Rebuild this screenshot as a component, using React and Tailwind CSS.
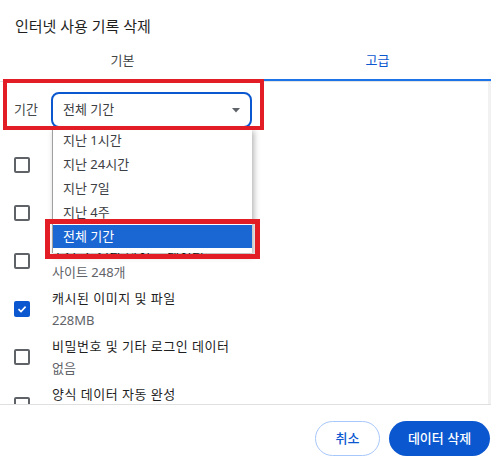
import React from 'react';

const FONT = { fontFamily: "'Noto Sans', 'Noto Sans CJK KR', sans-serif" };

const items = [
  { title: '인터넷 사용 기록', sub: '항목 1,024개', checked: false },
  { title: '다운로드 기록', sub: '없음', checked: false },
  { title: '쿠키 및 기타 사이트 데이터', sub: '사이트 248개', checked: false },
  { title: '캐시된 이미지 및 파일', sub: '228MB', checked: true },
  { title: '비밀번호 및 기타 로그인 데이터', sub: '없음', checked: false },
  { title: '양식 데이터 자동 완성', sub: '', checked: false },
];

const options = ['지난 1시간', '지난 24시간', '지난 7일', '지난 4주', '전체 기간'];

function Checkbox({ checked }) {
  if (checked) {
    return (
      <div className="w-4 h-4 rounded-[2px] bg-[#0b57d0] flex items-center justify-center">
        <svg width="12" height="12" viewBox="0 0 12 12">
          <path d="M2.5 6.2 L5 8.6 L9.6 3.6" fill="none" stroke="white" strokeWidth="1.6" />
        </svg>
      </div>
    );
  }
  return <div className="w-4 h-4 rounded-[2px] border-2 border-[#5f6368]" />;
}

export default function App() {
  return (
    <div className="relative w-[491px] h-[463px] bg-white overflow-hidden flex flex-col text-[#444746]" style={FONT}>
      {/* 제목 */}
      <div className="pt-[16px] pl-[15px] h-[42px] text-[15px] leading-[20px] text-[#1f1f1f]">
        인터넷 사용 기록 삭제
      </div>

      {/* 탭 */}
      <div className="flex h-[40px] border-b border-[#e3e3e3] text-[13px]">
        <div className="ml-[9px] w-[227px] h-[39px] pt-[8px] leading-[20px] text-center text-[#444746]">기본</div>
        <div className="ml-[28px] w-[227px] h-[39px] pt-[8px] leading-[20px] text-center text-[#0b57d0] border-b-2 border-[#1a73e8]">고급</div>
      </div>

      {/* 내용 */}
      <div className="flex h-[323px] border-b border-[#e0e0e0]">
        <div className="flex-1 pl-[14px] pt-[10px] overflow-hidden">
          <div className="flex items-center h-[36px]">
            <span className="w-[37px] text-[13px]">기간</span>
            <div className="w-[201px] h-[36px] rounded-lg border-2 border-[#0b57d0] flex items-center pl-[10px] pr-[10px] text-[13px] text-[#3c4043]">
              <span className="flex-1">전체 기간</span>
              <svg width="8" height="5" viewBox="0 0 8 5"><path d="M0 0 H8 L4 4.5 Z" fill="#5f6368" /></svg>
            </div>
          </div>

          <div className="mt-[15px] flex flex-col gap-[4px]">
            {items.map((it) => (
              <div key={it.title} className="flex items-center h-[44px]">
                <div className="w-[38px]"><Checkbox checked={it.checked} /></div>
                <div className="text-[13px] leading-[22px]">
                  <div className="text-[#1f1f1f] tracking-[0.5px]">{it.title}</div>
                  <div className="text-[#5f6368]">{it.sub || '\u00a0'}</div>
                </div>
              </div>
            ))}
          </div>
        </div>
        <div className="w-[3px] bg-[#f1f1f1]" />
      </div>

      {/* 버튼 */}
      <div className="flex justify-end gap-[9px] pt-[16px] pr-[1px]">
        <button className="w-[65px] h-[35px] rounded-full border border-[#a8c7fa] text-[13px] text-[#0b57d0] font-medium">취소</button>
        <button className="w-[101px] h-[35px] rounded-full bg-[#0b57d0] text-[13px] text-white font-medium">데이터 삭제</button>
      </div>

      {/* 펼쳐진 선택 목록 */}
      <div className="absolute left-[52px] top-[128px] w-[200px] h-[125px] bg-white border-l border-[#a0a0a0] shadow-[2px_3px_6px_rgba(0,0,0,0.3)] text-[13px]">
        {options.map((o) => (
          <div
            key={o}
            className={
              o === '전체 기간'
                ? 'h-[23px] mt-[1px] leading-[23px] pl-[10px] bg-[#1a66d2] text-white'
                : 'h-[24px] leading-[24px] pl-[10px] text-[#3c4043]'
            }
          >
            {o}
          </div>
        ))}
      </div>

      {/* 빨간 표시 상자 */}
      <div className="absolute left-[3px] top-[79px] w-[261px] h-[51px] border-4 border-[#e21d25]" />
      <div className="absolute left-[45px] top-[219px] w-[215px] h-[40px] border-[5px] border-[#e21d25]" />
    </div>
  );
}
